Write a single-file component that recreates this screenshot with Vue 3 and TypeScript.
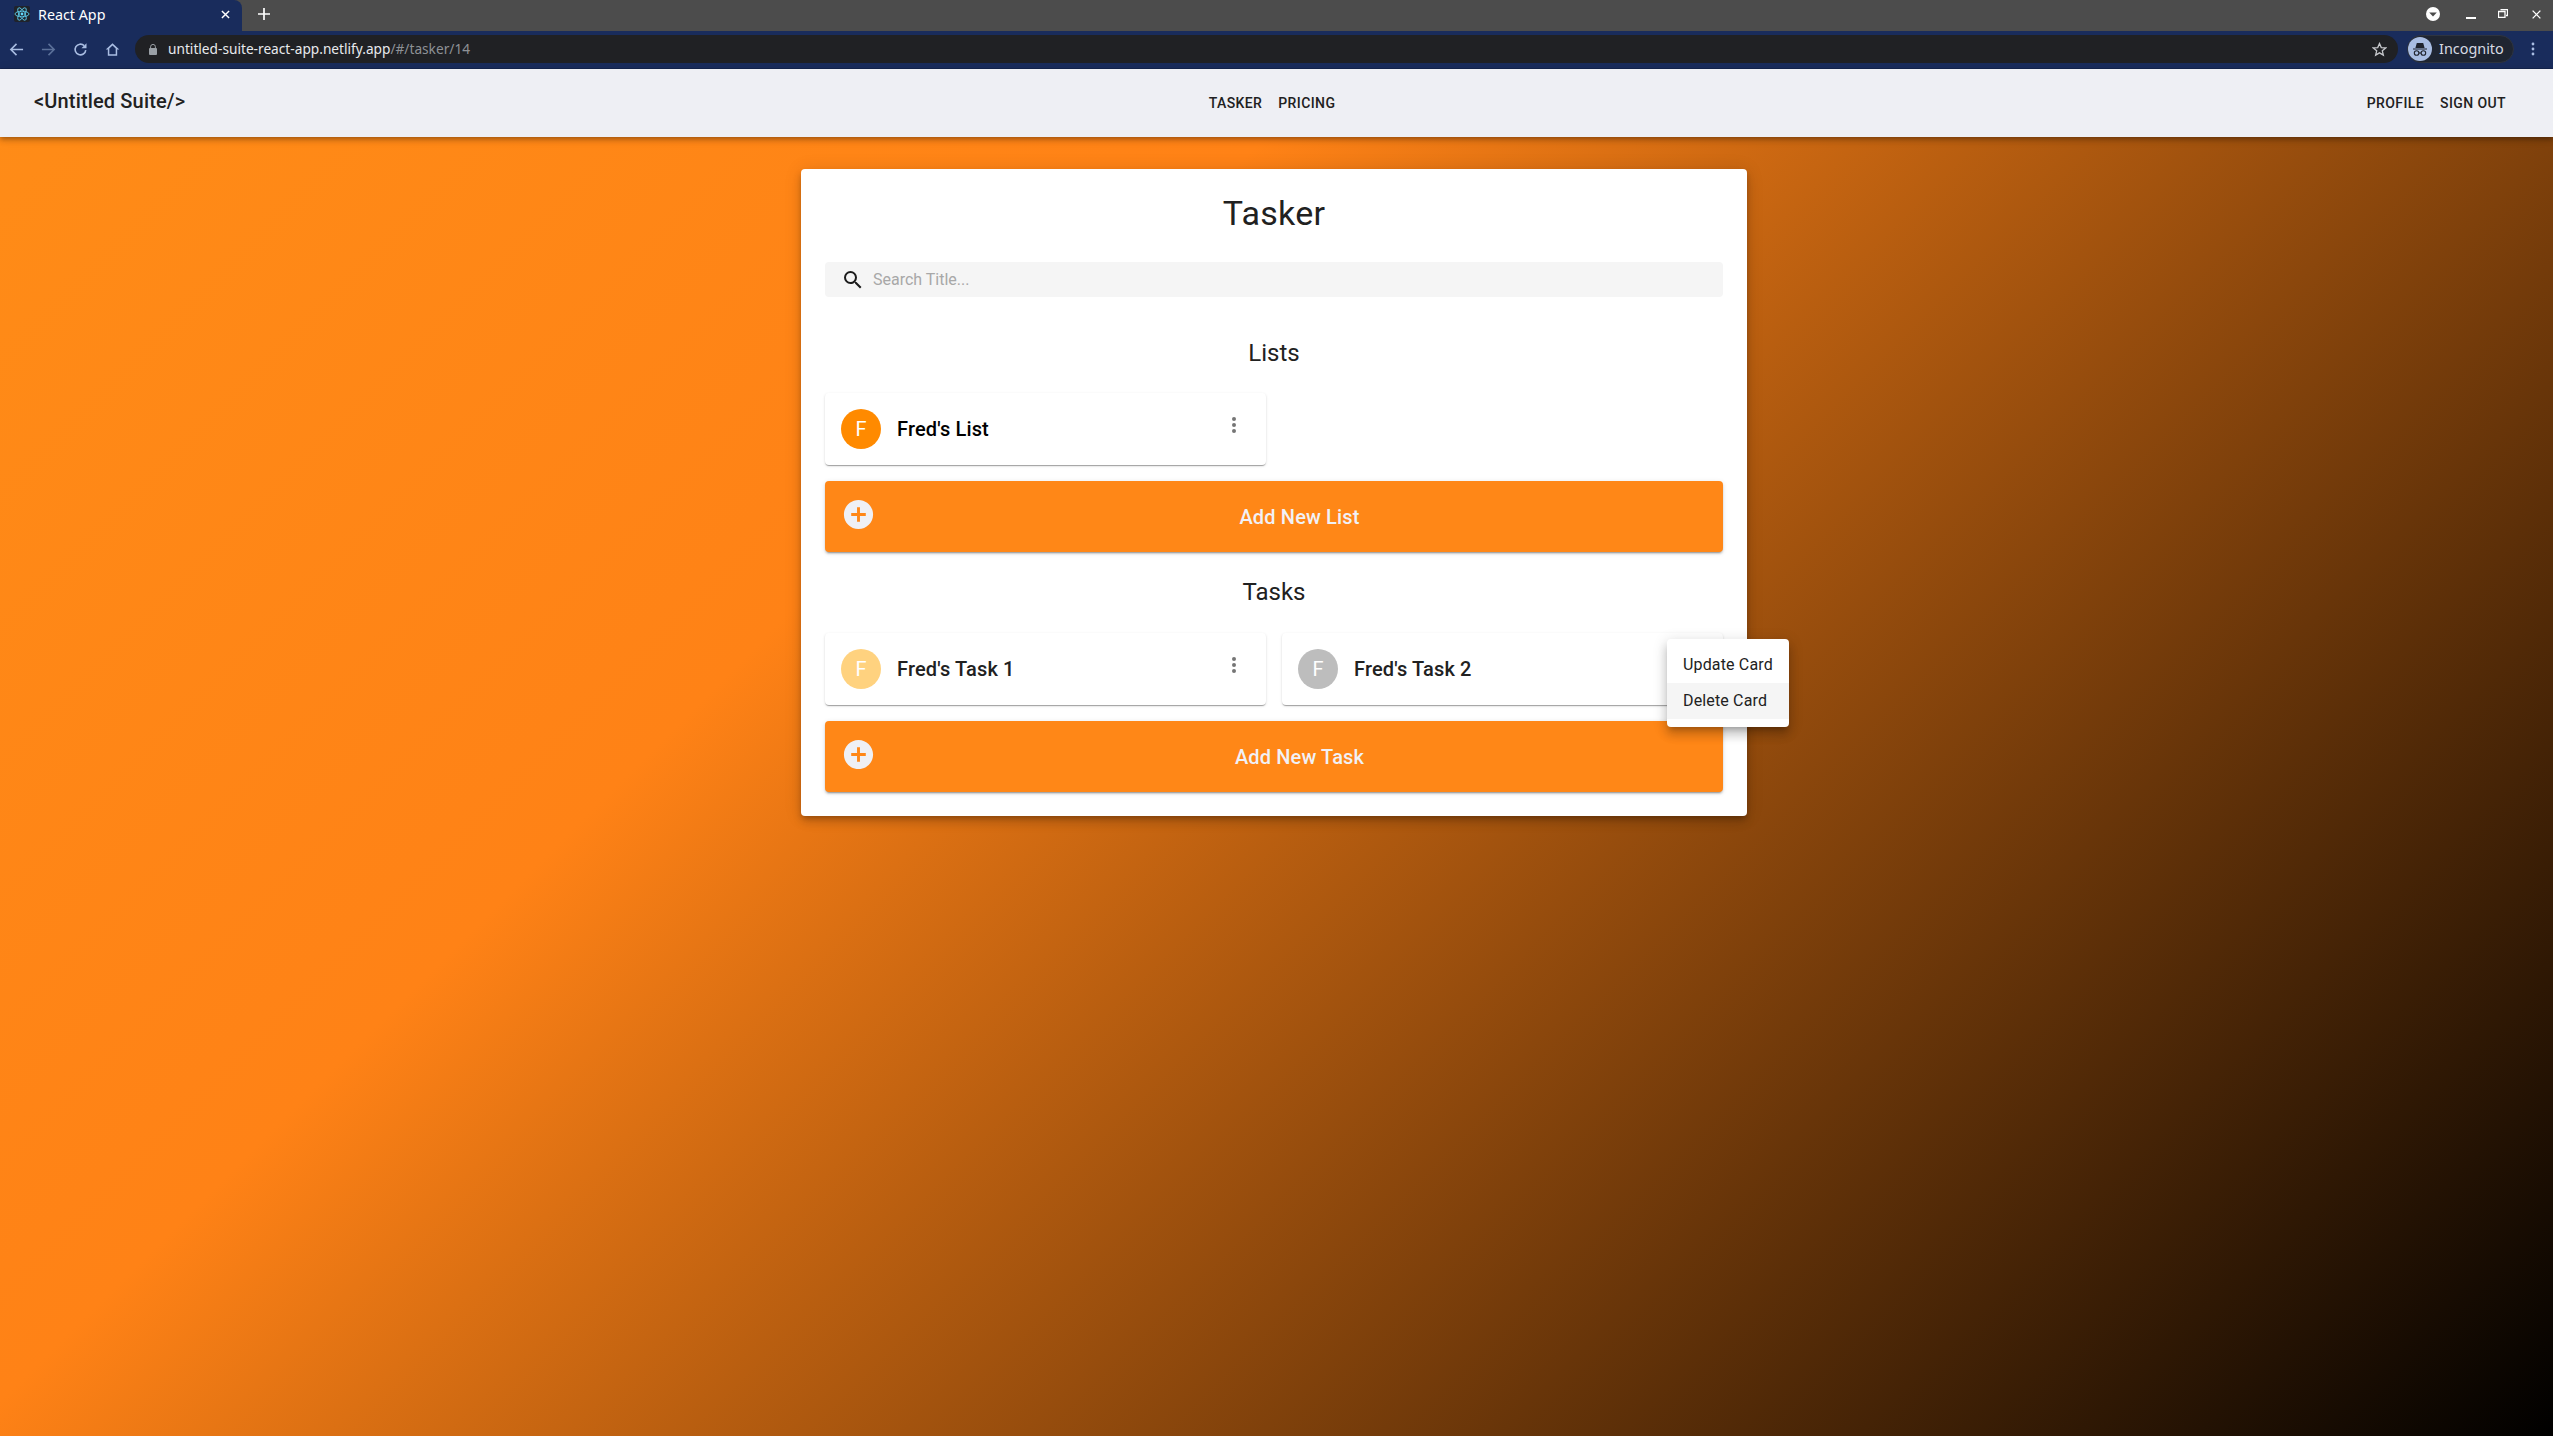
<script setup lang="ts">
interface Item { name: string; color: string; menu?: boolean }
const lists: Item[] = [{ name: "Fred's List", color: '#ff8a00' }]
const tasks: Item[] = [
  { name: "Fred's Task 1", color: '#ffd27f' },
  { name: "Fred's Task 2", color: '#bdbdbd', menu: true }
]
</script>

<template>
  <div class="root">
    <div class="tabstrip">
      <div class="tab">
        <svg class="favicon" viewBox="0 0 16 16">
          <rect width="16" height="16" rx="2" fill="#20232a" />
          <g fill="none" stroke="#61dafb" stroke-width=".8">
            <ellipse cx="8" cy="8" rx="7" ry="2.8" />
            <ellipse cx="8" cy="8" rx="7" ry="2.8" transform="rotate(60 8 8)" />
            <ellipse cx="8" cy="8" rx="7" ry="2.8" transform="rotate(120 8 8)" />
          </g>
          <circle cx="8" cy="8" r="1.4" fill="#61dafb" />
        </svg>
        <span class="tab-title">React App</span>
        <svg class="tab-close" viewBox="0 0 10 10"><path d="M1 1l8 8M9 1l-8 8" stroke="#fff" stroke-width="1.6" /></svg>
      </div>
      <svg class="new-tab" viewBox="0 0 12 12"><path d="M6 0v12M0 6h12" stroke="#fff" stroke-width="1.7" /></svg>
      <div class="window-controls">
        <svg class="wc wc-profile" viewBox="0 0 14 14"><circle cx="7" cy="7" r="7" fill="#fff" /><path d="M3.2 5.4h7.6L7 9.6z" fill="#4c4c4c" /></svg>
        <svg class="wc wc-min" viewBox="0 0 10 2"><rect width="10" height="2" fill="#fff" /></svg>
        <svg class="wc wc-restore" viewBox="0 0 10 9"><path d="M2.5.5h7v6H8M.5 2.5h6.5v6H.5z" fill="none" stroke="#fff" stroke-width="1.3" /></svg>
        <svg class="wc wc-close" viewBox="0 0 10 10"><path d="M.7.7l8.6 8.6M9.3.7L.7 9.3" stroke="#fff" stroke-width="1.5" /></svg>
      </div>
    </div>

    <div class="toolbar">
      <svg class="tb-icon" viewBox="0 0 16 16"><path d="M15 8H2M8 2L2 8l6 6" fill="none" stroke="#a9bde2" stroke-width="1.7" /></svg>
      <svg class="tb-icon" viewBox="0 0 16 16"><path d="M1 8h13M8 2l6 6-6 6" fill="none" stroke="#5b7099" stroke-width="1.7" /></svg>
      <svg class="tb-icon" viewBox="0 0 16 16"><path d="M13.6 8.6A5.7 5.7 0 1 1 11.9 3.9" fill="none" stroke="#a9bde2" stroke-width="1.7" /><path d="M14.4 1.2v5.4H9z" fill="#a9bde2" /></svg>
      <svg class="tb-icon" viewBox="0 0 16 16"><path d="M8 1.4L.8 8H3v6.6h10V8h2.2zM4.6 13V6.8L8 3.6l3.4 3.2V13z" fill="#a9bde2" /></svg>
      <div class="omnibox">
        <svg class="lock" viewBox="0 0 8 11"><path d="M1.6 4V2.8a2.4 2.4 0 0 1 4.8 0V4" fill="none" stroke="#9aa0a6" stroke-width="1" /><rect y="4" width="8" height="7" rx="1" fill="#9aa0a6" /></svg>
        <span class="url"><span class="url-host">untitled-suite-react-app.netlify.app</span><span class="url-path">/#/tasker/14</span></span>
        <svg class="star" viewBox="0 0 16 16"><path d="M8 1.6l1.9 4.3 4.7.4-3.6 3.1 1.1 4.6L8 11.6l-4.1 2.4L5 9.4 1.4 6.3l4.7-.4z" fill="none" stroke="#c6c8cc" stroke-width="1.4" /></svg>
      </div>
      <div class="incognito">
        <svg class="incognito-icon" viewBox="0 0 24 24">
          <circle cx="12" cy="12" r="12" fill="#a9bde2" />
          <path d="M5 11.4h14v1H5zM7.4 11l1.4-5h6.4l1.4 5z" fill="#20242e" />
          <circle cx="8.6" cy="16" r="2.3" fill="none" stroke="#20242e" stroke-width="1.1" />
          <circle cx="15.4" cy="16" r="2.3" fill="none" stroke="#20242e" stroke-width="1.1" />
          <path d="M10.9 16h2.2" stroke="#20242e" stroke-width="1.1" />
        </svg>
        <span class="incognito-label">Incognito</span>
      </div>
      <svg class="tb-menu" viewBox="0 0 4 14"><circle cx="2" cy="2" r="1.4" fill="#a9bde2" /><circle cx="2" cy="7" r="1.4" fill="#a9bde2" /><circle cx="2" cy="12" r="1.4" fill="#a9bde2" /></svg>
    </div>

    <div class="page">
      <header class="appbar">
        <div class="logo">&lt;Untitled Suite/&gt;</div>
        <nav class="nav-group">
          <span class="nav-link">Tasker</span>
          <span class="nav-link">Pricing</span>
        </nav>
        <nav class="nav-group">
          <span class="nav-link">Profile</span>
          <span class="nav-link">Sign Out</span>
        </nav>
      </header>

      <main class="panel">
        <h1 class="title">Tasker</h1>
        <label class="search">
          <svg class="search-icon" viewBox="0 0 24 24"><path d="M15.5 14h-.79l-.28-.27A6.47 6.47 0 0 0 16 9.5 6.5 6.5 0 1 0 9.5 16c1.61 0 3.09-.59 4.23-1.57l.27.28v.79l5 4.99L20.49 19l-4.99-5zm-6 0C7.01 14 5 11.99 5 9.5S7.01 5 9.5 5 14 7.01 14 9.5 11.99 14 9.5 14z" fill="#1c1c1c" /></svg>
          <input class="search-input" placeholder="Search Title..." />
        </label>

        <h2 class="section-title section-lists">Lists</h2>
        <div class="card-grid">
          <article v-for="l in lists" :key="l.name" class="item-card">
            <span class="avatar" :style="{ background: l.color }">F</span>
            <span class="item-name item-name-strong">{{ l.name }}</span>
            <svg class="more" viewBox="0 0 24 24"><path d="M12 8a2 2 0 1 0 0-4 2 2 0 0 0 0 4zm0 2a2 2 0 1 0 0 4 2 2 0 0 0 0-4zm0 6a2 2 0 1 0 0 4 2 2 0 0 0 0-4z" fill="#757575" /></svg>
          </article>
        </div>
        <button class="add-btn">
          <svg class="add-icon" viewBox="0 0 24 24"><path d="M12 2C6.48 2 2 6.48 2 12s4.48 10 10 10 10-4.48 10-10S17.52 2 12 2zm5 11h-4v4h-2v-4H7v-2h4V7h2v4h4v2z" fill="#eff0f5" /></svg>
          <span class="add-label">Add New List</span>
        </button>

        <h2 class="section-title section-tasks">Tasks</h2>
        <div class="card-grid">
          <article v-for="t in tasks" :key="t.name" class="item-card">
            <span class="avatar" :style="{ background: t.color }">F</span>
            <span class="item-name">{{ t.name }}</span>
            <svg class="more" viewBox="0 0 24 24"><path d="M12 8a2 2 0 1 0 0-4 2 2 0 0 0 0 4zm0 2a2 2 0 1 0 0 4 2 2 0 0 0 0-4zm0 6a2 2 0 1 0 0 4 2 2 0 0 0 0-4z" fill="#757575" /></svg>
            <ul v-if="t.menu" class="menu">
              <li class="menu-item">Update Card</li>
              <li class="menu-item menu-item-hover">Delete Card</li>
            </ul>
          </article>
        </div>
        <button class="add-btn">
          <svg class="add-icon" viewBox="0 0 24 24"><path d="M12 2C6.48 2 2 6.48 2 12s4.48 10 10 10 10-4.48 10-10S17.52 2 12 2zm5 11h-4v4h-2v-4H7v-2h4V7h2v4h4v2z" fill="#eff0f5" /></svg>
          <span class="add-label">Add New Task</span>
        </button>
      </main>
    </div>
  </div>
</template>

<style>
html, body { margin: 0; overflow: hidden; }
</style>

<style scoped>
.root {
  width: 2553px;
  height: 1436px;
  display: flex;
  flex-direction: column;
  font-family: Roboto, "Liberation Sans", sans-serif;
  color: #212121;
}

/* browser chrome */
.tabstrip {
  height: 31px;
  flex: none;
  box-sizing: border-box;
  padding-bottom: 3px;
  display: flex;
  align-items: center;
  background: #4c4c4c;
}
.tab {
  width: 242px;
  height: 31px;
  margin-bottom: -3px;
  flex: none;
  display: flex;
  align-items: center;
  box-sizing: border-box;
  padding: 0 0 3px 14px;
  background: #192c5c;
  border-radius: 0 8px 0 0;
}
.favicon { width: 16px; height: 16px; }
.tab-title {
  margin-left: 8px;
  font: 14.3px "Noto Sans", sans-serif;
  color: #fff;
}
.tab-close { width: 9px; height: 9px; margin-left: auto; margin-right: 12px; }
.new-tab { width: 12px; height: 12px; margin-left: 16px; }
.window-controls { margin-left: auto; display: flex; align-items: center; }
.wc-profile { width: 14px; height: 14px; margin-right: 26px; }
.wc-min { width: 10px; height: 2px; margin-right: 22px; margin-top: 7px; }
.wc-restore { width: 10px; height: 9px; margin-right: 24px; margin-top: -1px; }
.wc-close { width: 9px; height: 9px; margin-right: 12px; }

.toolbar {
  height: 38px;
  flex: none;
  display: flex;
  align-items: center;
  box-sizing: border-box;
  padding: 0 0 1px 9px;
  background: #192c5c;
  border-bottom: 1px solid #16264f;
}
.tb-icon { width: 15px; height: 15px; margin-right: 17px; flex: none; }
.omnibox {
  height: 28px;
  margin-left: -2px;
  width: 2263px;
  flex: none;
  box-sizing: border-box;
  display: flex;
  align-items: center;
  padding: 0 11px 0 14px;
  border-radius: 14px;
  background: #202124;
}
.lock { width: 8px; height: 11px; flex: none; }
.url { margin: -1px 0 0 11px; font: 13.7px "Noto Sans", sans-serif; }
.url-host { color: #e8eaed; }
.url-path { color: #8e9196; }
.star { width: 15px; height: 15px; margin-left: auto; }
.incognito {
  height: 28px;
  width: 107px;
  margin-left: 9px;
  flex: none;
  box-sizing: border-box;
  display: flex;
  align-items: center;
  border: 1px solid #2e3440;
  border-radius: 14px;
  background: #1f2531;
}
.incognito-icon { width: 24px; height: 24px; flex: none; }
.incognito-label {
  margin: -1px 0 0 7px;
  font: 14.4px "Noto Sans", sans-serif;
  color: #d7dbe3;
}
.tb-menu { width: 4px; height: 14px; margin-left: 17px; flex: none; }

/* page */
.page {
  flex: 1;
  min-height: 0;
  background: linear-gradient(135deg, #ff8c17 0%, #ff8216 34%, #000 100%);
}
.appbar {
  height: 68px;
  box-sizing: border-box;
  display: flex;
  justify-content: space-between;
  align-items: center;
  padding: 0 39px 0 34px;
  background: #eeeff4;
  box-shadow: 0 2px 4px -1px rgba(0,0,0,.2), 0 4px 5px 0 rgba(0,0,0,.14), 0 1px 10px 0 rgba(0,0,0,.12);
}
.logo { font-size: 20px; font-weight: 500; letter-spacing: .15px; margin-top: -5px; }
.nav-group { display: flex; }
.nav-link {
  padding: 6px 8px;
  font-size: 14px;
  font-weight: 500;
  letter-spacing: .4px;
  line-height: 1.75;
  text-transform: uppercase;
}

.panel {
  width: 946px;
  box-sizing: border-box;
  margin: 32px 0 0 801px;
  padding: 23px 24px 24px;
  background: #fff;
  border-radius: 4px;
  box-shadow: 0 3px 5px -1px rgba(0,0,0,.2), 0 6px 10px 0 rgba(0,0,0,.14), 0 1px 18px 0 rgba(0,0,0,.12);
}
.title {
  margin: 0;
  font-size: 34px;
  font-weight: 400;
  letter-spacing: .25px;
  line-height: 42px;
  text-align: center;
}
.search {
  height: 35px;
  margin-top: 28px;
  display: flex;
  align-items: center;
  padding-left: 16px;
  background: #f5f5f5;
  border-radius: 4px;
}
.search-icon { width: 24px; height: 24px; flex: none; }
.search-input {
  flex: 1;
  margin-left: 8px;
  padding: 0;
  border: 0;
  outline: 0;
  background: transparent;
  font: 16px Roboto, sans-serif;
}
.search-input::placeholder { color: #a8a8a8; opacity: 1; }
.section-title {
  margin: 0 0 25px;
  font-size: 24px;
  font-weight: 400;
  line-height: 32px;
  text-align: center;
}
.section-lists { margin-top: 40px; margin-bottom: 24px; }
.section-tasks { margin-top: 24px; }
.card-grid {
  display: grid;
  grid-template-columns: 1fr 1fr;
  gap: 16px;
}
.item-card {
  position: relative;
  height: 72px;
  box-sizing: border-box;
  display: flex;
  align-items: center;
  padding: 0 20px 0 16px;
  background: #fff;
  border-radius: 4px;
  box-shadow: 0 2px 1px -1px rgba(0,0,0,.2), 0 1px 1px 0 rgba(0,0,0,.14), 0 1px 3px 0 rgba(0,0,0,.12);
}
.avatar {
  width: 40px;
  height: 40px;
  flex: none;
  display: flex;
  align-items: center;
  justify-content: center;
  border-radius: 50%;
  color: #fff;
  font-size: 20px;
}
.item-name { margin-left: 16px; font-size: 20px; font-weight: 500; letter-spacing: .15px; }
.item-name-strong { color: #000; }
.more { width: 24px; height: 24px; margin-left: auto; margin-top: -8px; flex: none; }
.menu {
  position: absolute;
  top: 6px;
  left: 385px;
  width: 122px;
  margin: 0;
  padding: 8px 0;
  list-style: none;
  background: #fff;
  border-radius: 4px;
  box-shadow: 0 5px 5px -3px rgba(0,0,0,.2), 0 8px 10px 1px rgba(0,0,0,.14), 0 3px 14px 2px rgba(0,0,0,.12);
}
.menu-item {
  height: 36px;
  box-sizing: border-box;
  padding-left: 16px;
  font-size: 16px;
  letter-spacing: .15px;
  line-height: 36px;
}
.menu-item-hover { background: #f5f5f5; }
.add-btn {
  width: 100%;
  height: 71px;
  margin-top: 16px;
  display: flex;
  box-sizing: border-box;
  padding: 16px 0 0 16px;
  border: 0;
  border-radius: 4px;
  background: #ff8717;
  box-shadow: 0 3px 1px -2px rgba(0,0,0,.2), 0 2px 2px 0 rgba(0,0,0,.14), 0 1px 5px 0 rgba(0,0,0,.12);
}
.add-icon { width: 35px; height: 35px; flex: none; }
.add-label {
  flex: 1;
  padding-top: 8px;
  text-align: center;
  color: #f1f1f6;
  font: 500 20px Roboto, sans-serif;
  letter-spacing: .15px;
}
</style>
